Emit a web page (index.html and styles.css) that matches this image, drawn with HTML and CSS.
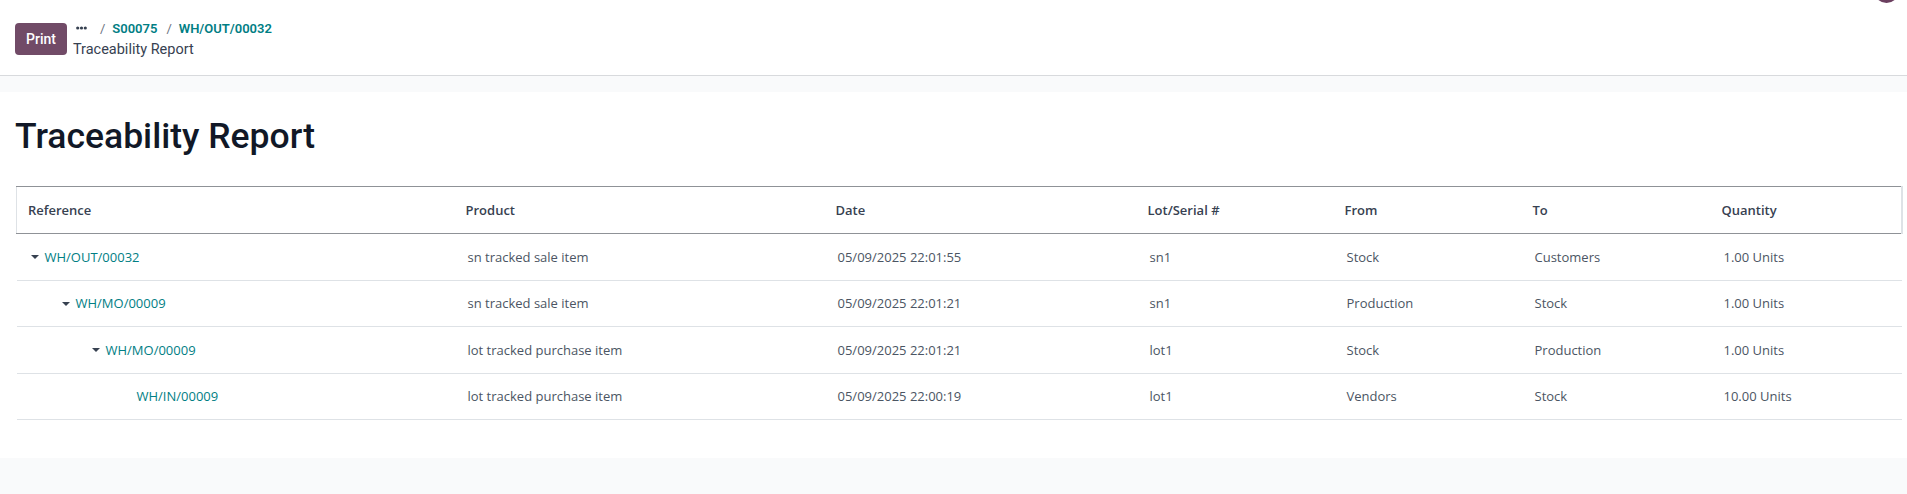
FILE: index.html
```html
<!DOCTYPE html>
<html lang="en">
<head>
    <meta charset="UTF-8" />
    <title>Traceability Report</title>
    <link rel="stylesheet" href="styles.css">
</head>
<body>
    <div class="avatar"></div>

    <!-- Control panel -->
    <div class="control-panel">
        <button class="print-btn">Print</button>
        <div class="breadcrumbs">
            <div class="crumb-line">
                <span class="more-btn">
                    <svg width="11" height="4" viewBox="0 0 11 4"><circle cx="1.7" cy="2" r="1.6"/><circle cx="5.5" cy="2" r="1.6"/><circle cx="9.3" cy="2" r="1.6"/></svg>
                </span>
                <span class="sep">/</span>
                <a class="crumb" href="#">S00075</a>
                <span class="sep">/</span>
                <a class="crumb" href="#">WH/OUT/00032</a>
            </div>
            <div class="crumb-current">Traceability Report</div>
        </div>
    </div>

    <div class="content">
        <div class="report">
            <h1>Traceability Report</h1>
            <table class="trace-table">
                <colgroup>
                    <col style="width: 438px">
                    <col style="width: 370px">
                    <col style="width: 312px">
                    <col style="width: 197px">
                    <col style="width: 188px">
                    <col style="width: 189px">
                    <col style="width: 191px">
                </colgroup>
                <thead>
                    <tr>
                        <th>Reference</th>
                        <th>Product</th>
                        <th>Date</th>
                        <th>Lot/Serial #</th>
                        <th>From</th>
                        <th>To</th>
                        <th>Quantity</th>
                    </tr>
                </thead>
                <tbody>
                    <tr>
                        <td><span class="level-0"><span class="caret"></span><a href="#">WH/OUT/00032</a></span></td>
                        <td>sn tracked sale item</td>
                        <td>05/09/2025 22:01:55</td>
                        <td>sn1</td>
                        <td>Stock</td>
                        <td>Customers</td>
                        <td>1.00 Units</td>
                    </tr>
                    <tr>
                        <td><span class="level-1"><span class="caret"></span><a href="#">WH/MO/00009</a></span></td>
                        <td>sn tracked sale item</td>
                        <td>05/09/2025 22:01:21</td>
                        <td>sn1</td>
                        <td>Production</td>
                        <td>Stock</td>
                        <td>1.00 Units</td>
                    </tr>
                    <tr>
                        <td><span class="level-2"><span class="caret"></span><a href="#">WH/MO/00009</a></span></td>
                        <td>lot tracked purchase item</td>
                        <td>05/09/2025 22:01:21</td>
                        <td>lot1</td>
                        <td>Stock</td>
                        <td>Production</td>
                        <td>1.00 Units</td>
                    </tr>
                    <tr>
                        <td><span class="level-3"><span class="caret empty"></span><a href="#">WH/IN/00009</a></span></td>
                        <td>lot tracked purchase item</td>
                        <td>05/09/2025 22:00:19</td>
                        <td>lot1</td>
                        <td>Vendors</td>
                        <td>Stock</td>
                        <td>10.00 Units</td>
                    </tr>
                </tbody>
            </table>
        </div>
    </div>
</body>
</html>
```

FILE: styles.css
```css
:root {
    --brand-color: #714b67;
    --link-color: #017e84;
    --text-color: #374151;
    --text-muted-color: #4b5563;
    --heading-color: #111827;
    --border-color: #dee2e6;
    --border-dark-color: #8f9297;
    --bg-light: #f9fafb;
}

* {
    margin: 0;
    padding: 0;
    box-sizing: border-box;
}

body {
    font-family: Roboto, "Noto Sans", Arial, sans-serif;
    color: var(--text-color);
    background-color: var(--bg-light);
    position: relative;
    height: 494px;
    overflow: hidden;
}

a {
    color: var(--link-color);
    text-decoration: none;
}

.avatar {
    position: absolute;
    top: -22px;
    right: 8px;
    width: 25px;
    height: 25px;
    border-radius: 50%;
    background-color: #6b3f5f;
}

.control-panel {
    height: 76px;
    background-color: #fff;
    border-bottom: 1px solid #d8dadd;
    display: flex;
    align-items: flex-start;
    padding: 18px 0 0 15px;
    gap: 6px;
}

.print-btn {
    margin-top: 5px;
    height: 32px;
    padding: 0 11px;
    background-color: var(--brand-color);
    color: #fff;
    border: none;
    border-radius: 4px;
    font-family: inherit;
    font-size: 14px;
    font-weight: 500;
}

.breadcrumbs {
    display: flex;
    flex-direction: column;
}

.crumb-line {
    display: flex;
    align-items: center;
    height: 20px;
    font-size: 13px;
    font-weight: 600;
}

.more-btn {
    display: inline-flex;
    align-items: center;
    padding: 0 4px 0 3px;
    fill: #374151;
}

.sep {
    color: #6b7280;
    font-weight: 400;
    margin: 0 7px 0 9px;
}

.crumb-current {
    font-size: 14.5px;
    line-height: 24px;
    color: var(--text-color);
}

.content {
    padding-top: 16px;
}

.report {
    background-color: #fff;
    height: 366px;
    padding: 23px 6px 0 15px;
}

h1 {
    font-size: 35.5px;
    font-weight: 500;
    line-height: 43px;
    color: var(--heading-color);
    margin-bottom: 28px;
}

.trace-table {
    margin-left: 1px;
    border-collapse: collapse;
    table-layout: fixed;
    width: 1886px;
    font-family: "Open Sans", Roboto, Arial, sans-serif;
    font-size: 13px;
}

.trace-table th {
    text-align: left;
    font-weight: 600;
    color: var(--text-color);
    height: 47px;
    padding: 0 11px;
    border-top: 1px solid var(--border-dark-color);
    border-bottom: 1px solid var(--border-dark-color);
}

.trace-table th:first-child {
    border-left: 1px solid var(--border-color);
}

.trace-table th:last-child {
    border-right: 2px solid var(--border-color);
}

.trace-table td {
    height: 46.5px;
    padding: 0 11px 0 13px;
    color: var(--text-muted-color);
    border-bottom: 1px solid var(--border-color);
}

.trace-table td:first-child {
    padding-left: 11px;
}

.caret {
    display: inline-block;
    width: 0;
    height: 0;
    border-left: 4px solid transparent;
    border-right: 4px solid transparent;
    border-top: 4px solid #374151;
    margin: 0 6px 2px 3px;
    vertical-align: middle;
}

.caret.empty {
    border-top-color: transparent;
}

.level-1 { padding-left: 31px; }
.level-2 { padding-left: 61px; }
.level-3 { padding-left: 92px; }

.level-0, .level-1, .level-2, .level-3 {
    display: inline-block;
}
```
